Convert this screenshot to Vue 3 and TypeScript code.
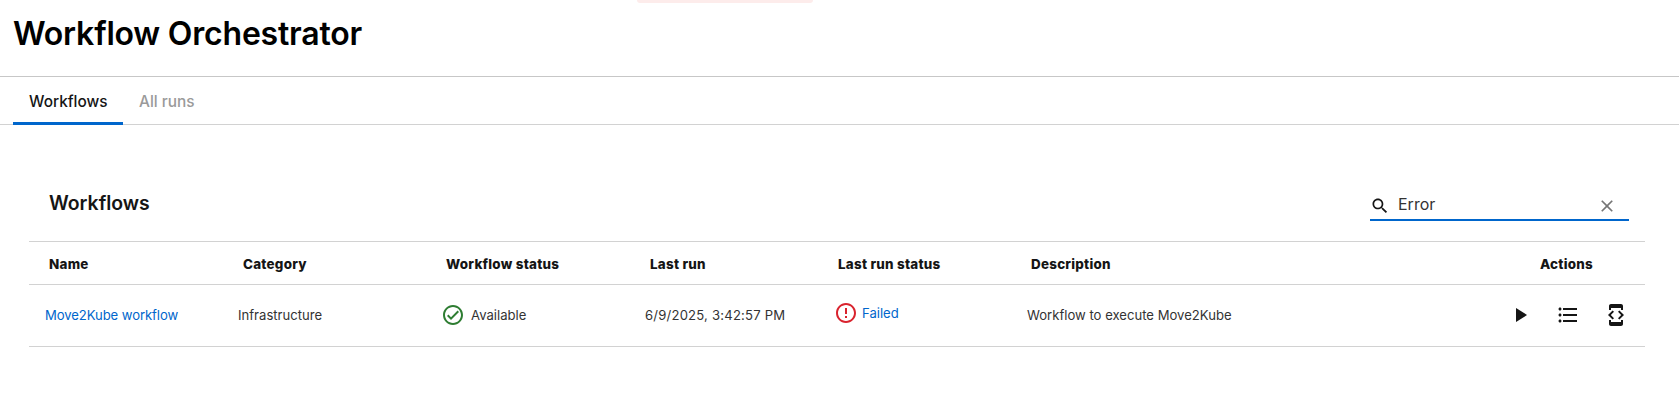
<script setup lang="ts">
interface Col { label: string }
const cols: Col[] = [
  { label: 'Name' },
  { label: 'Category' },
  { label: 'Workflow status' },
  { label: 'Last run' },
  { label: 'Last run status' },
  { label: 'Description' },
  { label: 'Actions' },
]
</script>

<template>
  <div class="page">
    <div class="toast-edge"></div>
    <header class="head"><h1>Workflow Orchestrator</h1></header>
    <nav class="tabs">
      <a class="tab active">Workflows</a>
      <a class="tab">All runs</a>
    </nav>
    <section class="card">
      <div class="toolbar">
        <h2>Workflows</h2>
        <div class="search">
          <svg class="s-ic" viewBox="0 0 24 24"><path d="M15.5 14h-.79l-.28-.27C15.41 12.59 16 11.11 16 9.5 16 5.91 13.09 3 9.5 3S3 5.91 3 9.5 5.91 16 9.5 16c1.61 0 3.09-.59 4.23-1.57l.27.28v.79l5 4.99L20.49 19l-4.99-5zm-6 0C7.01 14 5 11.99 5 9.5S7.01 5 9.5 5 14 7.01 14 9.5 11.99 14 9.5 14z"/></svg>
          <span class="s-text">Error</span>
          <svg class="s-x" viewBox="0 0 24 24"><path d="M19 6.41 17.59 5 12 10.59 6.41 5 5 6.41 10.59 12 5 17.59 6.41 19 12 13.41 17.59 19 19 17.59 13.41 12z"/></svg>
        </div>
      </div>
      <div class="table">
        <div v-for="c in cols" :key="c.label" class="th">{{ c.label }}</div>
        <div class="td"><a class="link name">Move2Kube workflow</a></div>
        <div class="td cat">Infrastructure</div>
        <div class="td status avail">
          <svg class="st-ic green" viewBox="0 0 24 24"><path d="M12 2C6.48 2 2 6.48 2 12s4.48 10 10 10 10-4.48 10-10S17.52 2 12 2zm0 18c-4.41 0-8-3.59-8-8s3.59-8 8-8 8 3.59 8 8-3.59 8-8 8zm4.59-12.42L10 14.17l-2.59-2.58L6 13l4 4 8-8z"/></svg>
          <span>Available</span>
        </div>
        <div class="td date">6/9/2025, 3:42:57 PM</div>
        <div class="td status raised">
          <svg class="st-ic red" viewBox="0 0 24 24"><path d="M11 15h2v2h-2zm0-8h2v6h-2zm.99-5C6.47 2 2 6.48 2 12s4.47 10 9.99 10C17.52 22 22 17.52 22 12S17.52 2 11.99 2zM12 20c-4.42 0-8-3.58-8-8s3.58-8 8-8 8 3.58 8 8-3.58 8-8 8z"/></svg>
          <a class="link">Failed</a>
        </div>
        <div class="td">Workflow to execute Move2Kube</div>
        <div class="td actions">
          <span class="btn"><svg viewBox="0 0 24 24"><path d="M8 5v14l11-7z"/></svg></span>
          <span class="btn"><svg viewBox="0 0 24 24"><path d="M4 10.5c-.83 0-1.5.67-1.5 1.5s.67 1.5 1.5 1.5 1.5-.67 1.5-1.5-.67-1.5-1.5-1.5zm0-6c-.83 0-1.5.67-1.5 1.5S3.17 7.5 4 7.5 5.5 6.83 5.5 6 4.83 4.5 4 4.5zm0 12c-.83 0-1.5.68-1.5 1.5s.68 1.5 1.5 1.5 1.5-.68 1.5-1.5-.67-1.5-1.5-1.5zM7 19h14v-2H7v2zm0-6h14v-2H7v2zm0-8v2h14V5H7z"/></svg></span>
          <span class="btn"><svg viewBox="0 0 24 24"><path d="M7 5h10v2h2V3c0-1.1-.9-1.99-2-1.99L7 1c-1.1 0-2 .9-2 2v4h2V5zm8.41 11.59L20 12l-4.59-4.59L14 8.83 17.17 12 14 15.17l1.41 1.42zM10 15.17L6.83 12 10 8.83 8.59 7.41 4 12l4.59 4.59L10 15.17zM17 19H7v-2H5v4c0 1.1.9 2 2 2h10c1.1 0 2-.9 2-2v-4h-2v2z"/></svg></span>
        </div>
      </div>
    </section>
  </div>
</template>

<style scoped>
.page {
  position: relative;
  width: 1679px;
  height: 404px;
  overflow: hidden;
  background: #fff;
  font-family: Inter, "Liberation Sans", sans-serif;
  color: #151515;
}
.toast-edge {
  position: absolute;
  left: 637px;
  top: 0;
  width: 176px;
  height: 3px;
  background: #fdeceb;
  border-radius: 0 0 4px 4px;
}
.head {
  height: 76px;
  border-bottom: 1px solid #c7c7c7;
  padding-left: 13px;
  display: flex;
  align-items: flex-start;
}
h1 {
  margin: 14px 0 0;
  font-size: 32px;
  line-height: 40px;
  font-weight: 600;
  letter-spacing: -0.2px;
  color: #000;
}
.tabs {
  height: 48px;
  box-sizing: border-box;
  border-bottom: 1px solid #d2d2d2;
  padding-left: 13px;
  display: flex;
}
.tab {
  height: 48px;
  box-sizing: border-box;
  padding: 0 16px;
  display: flex;
  align-items: center;
  font-size: 15.4px;
  font-weight: 500;
  color: #9a9a9a;
}
.tab.active {
  color: #151515;
  border-bottom: 3px solid #0066cc;
  padding: 3px 0 0 16px;
  width: 110px;
}
.card {
  margin: 0 34px 0 29px;
}
.toolbar {
  height: 116px;
  display: flex;
  align-items: flex-start;
  justify-content: space-between;
  padding: 0 16px 0 20px;
}
h2 {
  margin: 64px 0 0;
  font-size: 19.4px;
  line-height: 28px;
  font-weight: 600;
}
.search {
  margin-top: 67px;
  width: 259px;
  height: 27px;
  border-bottom: 2px solid #0066cc;
  display: flex;
  align-items: center;
}
.s-ic { width: 20px; height: 20px; fill: #151515; flex: none; }
.s-text { margin: 0 0 3px 8px; font-size: 16px; color: #333; flex: 1; }
.s-x { width: 20px; height: 20px; fill: #757575; flex: none; margin-right: 12px; }
.table {
  display: grid;
  grid-template-columns: 194px 203px 204px 188px 193px 509px 125px;
  grid-template-rows: 43px 62px;
  border-top: 1px solid #d2d2d2;
}
.th {
  padding: 2px 0 0 20px;
  border-bottom: 1px solid #d2d2d2;
  display: flex;
  align-items: center;
  font-size: 13.4px;
  font-weight: 800;
  letter-spacing: 0.25px;
  color: #151515;
}
.td {
  padding: 0 0 2px 16px;
  border-bottom: 1px solid #d2d2d2;
  display: flex;
  align-items: center;
  font-size: 13.1px;
  color: #333;
}
.cat { padding-left: 15px; }
.name { letter-spacing: -0.08px; }
.date { letter-spacing: 0.2px; padding-left: 15px; }
.link { color: #0066cc; }
.status { gap: 6px; }
.st-ic { width: 24px; height: 24px; flex: none; margin-left: -2px; }
.avail .st-ic { margin-left: -1px; }
.green { fill: #2e7d32; }
.red { fill: #d9232e; }
.raised { padding-bottom: 6px; padding-left: 18px; gap: 4px; }
.actions {
  padding: 0 0 1px;
  margin-left: -24px;
}
.btn {
  width: 48px;
  height: 48px;
  display: flex;
  align-items: center;
  justify-content: center;
  flex: none;
}
.btn svg { width: 24px; height: 24px; fill: #151515; }
</style>
